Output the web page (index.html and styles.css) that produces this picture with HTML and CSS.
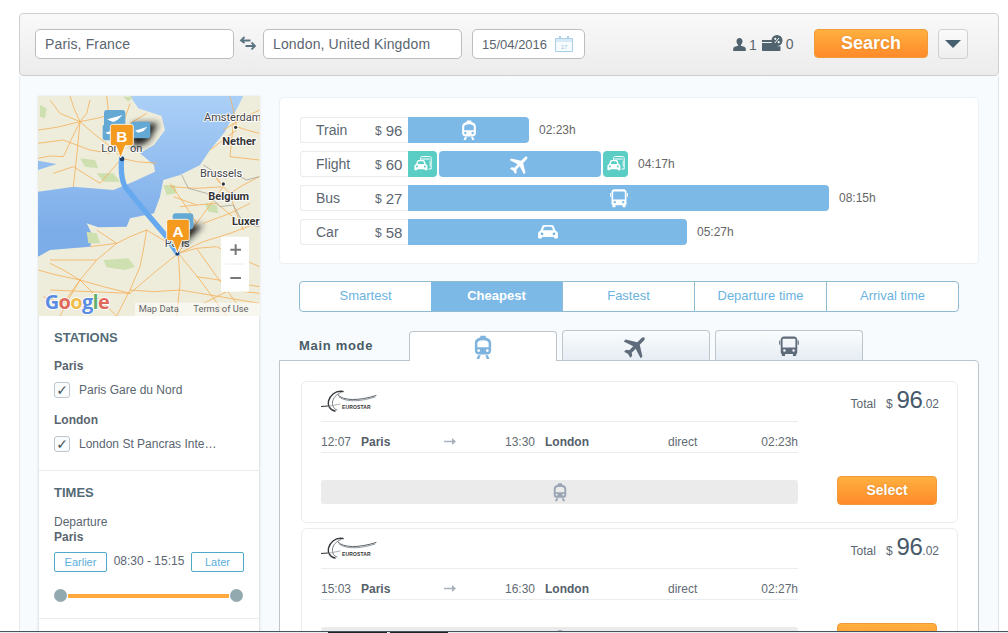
FILE: index.html
```html
<!DOCTYPE html>
<html lang="en">
<head>
<meta charset="utf-8">
<title>Paris to London</title>
<link rel="stylesheet" href="styles.css">
</head>
<body>
<svg class="defs" width="0" height="0" aria-hidden="true">
  <defs>
    <symbol id="i-train" viewBox="0 0 24 24">
      <path fill-rule="evenodd" d="M9.500 1.500h5v1.700C17.200 3.700 19.500 5.300 19.500 8v7.500c0 1.900-1.600 3.500-3.500 3.500H8c-1.900 0-3.500-1.600-3.500-3.500V8c0-2.700 2.300-4.300 5-4.800zM6.800 8.300v3.900h10.400V8.300C17.200 6.800 15 5.700 12 5.700S6.800 6.800 6.800 8.300zM8 14a1.300 1.300 0 100 2.600A1.300 1.300 0 008 14zm8 0a1.300 1.300 0 100 2.600A1.300 1.300 0 0016 14z"/>
      <path d="M7.500 19.500h2.300L8.500 23H6zM16.500 19.500h-2.300l1.300 3.500H18z"/>
    </symbol>
    <symbol id="i-plane" viewBox="0 0 24 24">
      <path transform="rotate(45 12 12)" d="M23 17v-2.400l-9.400-5.900V3.500C13.600 2.400 12.900 1 12 1s-1.600 1.400-1.600 2.500v5.200L1 14.600V17l9.400-3v5.200l-2.400 1.800V23.500l4-1.200 4 1.200V21l-2.400-1.800V14z"/>
    </symbol>
    <symbol id="i-bus" viewBox="0 0 24 24">
      <path fill-rule="evenodd" d="M6.500 1.500h11c2 0 3.500 1.500 3.500 3.500v14c0 .9-.5 1.500-1.200 1.700V23h-3.500v-2.200H7.700V23H4.200v-2.300C3.500 20.500 3 19.900 3 19V5c0-2 1.500-3.500 3.500-3.500zM6 4.200C5.400 4.200 5 4.700 5 5.300v8.400h14V5.300c0-.6-.4-1.100-1-1.100zM7 15.500a1.400 1.400 0 100 2.800 1.400 1.400 0 000-2.800zm10 0a1.400 1.400 0 100 2.800 1.400 1.400 0 000-2.800z"/>
      <path d="M1.300 6h1.200v4.500H1.300zM21.500 6h1.200v4.500h-1.200z"/>
    </symbol>
    <symbol id="i-car" viewBox="0 0 24 24">
      <path fill-rule="evenodd" d="M3.800 10.500 5.700 5.800C6.100 4.800 6.900 4.300 8 4.300h8c1.100 0 1.900.5 2.300 1.500l1.900 4.700c1.300.5 2.600 1.400 2.600 3v4.500c0 .6-.4 1-1 1h-2.300c-.6 0-1-.4-1-1v-.6H5.500v.6c0 .6-.4 1-1 1H2.200c-.6 0-1-.4-1-1v-4.500c0-1.600 1.300-2.500 2.600-3zM6.400 10.200h11.200L16.300 7c-.2-.5-.5-.7-1-.7H8.700c-.5 0-.8.2-1 .7zM5.500 12.600a1.500 1.500 0 100 3 1.500 1.500 0 000-3zm13 0a1.500 1.500 0 100 3 1.500 1.500 0 000-3z"/>
    </symbol>
    <symbol id="i-shuttle" viewBox="0 0 24 24">
      <path fill="none" stroke="currentColor" stroke-width="1.200" d="M9 7V5c0-1.200.8-2 2-2h9c1 0 1.800.8 1.800 2v13h-3"/>
      <path d="M10 5.500h10v1H10zM20 8h1v7h-1z"/>
      <path fill-rule="evenodd" d="M3.500 12.200 5 8.500c.3-.8.9-1.200 1.800-1.200h5.400c.9 0 1.500.4 1.800 1.200l1.500 3.700c1 .4 1.800 1.100 1.800 2.400v4.200c0 .5-.3.8-.8.8h-1.700c-.5 0-.8-.3-.8-.8v-.5H5v.5c0 .5-.3.8-.8.8H2.500c-.5 0-.8-.3-.8-.8v-4.200c0-1.300.8-2 1.800-2.400zM5.500 12h8l-.9-2.600c-.1-.4-.4-.6-.8-.6H7.200c-.4 0-.7.2-.8.6zM4.700 13.800a1.200 1.200 0 100 2.400 1.200 1.200 0 000-2.400zm9.600 0a1.200 1.200 0 100 2.400 1.200 1.200 0 000-2.400z"/>
    </symbol>
    <symbol id="i-logo" viewBox="0 0 56 24">
      <g fill="none" stroke-linecap="round">
        <path d="M22 2.500C14 1 9 7 7.500 12 6.500 16 8.500 21 14 22" stroke="#34383c" stroke-width="1.400"/>
        <path d="M20 3.500C15 5.500 12 9 11.500 13 11.300 17 12.500 20 16 21" stroke="#7a8086" stroke-width="1"/>
        <path d="M17 6C22 12 38 12 55 6.500" stroke="#5b6268" stroke-width="1"/>
        <path d="M18 8C26 14 42 12 54 8" stroke="#8f969c" stroke-width="1"/>
        <path d="M0 17.500 7 17" stroke="#2f3336" stroke-width="1"/>
        <path d="M9 17 19 15" stroke="#9aa0a5" stroke-width=".8"/>
      </g>
    </symbol>
  </defs>
</svg>

<div class="page">
  <header class="search-bar">
    <div class="field field-place">Paris, France</div>
    <svg class="swap" width="18" height="14" viewBox="0 0 18 14"><g fill="none" stroke="#5b7482" stroke-width="1.800"><path d="M2 4.500h9.500M5.500 1 2 4.500 5.500 7"/><path d="M16 10H6.500M12.500 6.500 16 10l-3.500 3.500"/></g></svg>
    <div class="field field-place">London, United Kingdom</div>
    <div class="field field-date">
      <span>15/04/2016</span>
      <svg width="18" height="16" viewBox="0 0 18 16"><path d="M.5 2.500h17v13H.5z" fill="#f6fbfe" stroke="#a9d0e6"/><path d="M1 3h16v3H1z" fill="#d6e9f4"/><path d="M4 0h2v3H4zM12 0h2v3h-2z" fill="#a9d0e6"/><text class="cal-day" x="9" y="13">17</text></svg>
    </div>
    <div class="travellers">
      <svg width="15" height="13" viewBox="0 0 15 13"><path d="M7.500 0C9.300 0 10.500 1.300 10.500 3.200c0 1.500-.7 2.900-1.600 3.500v1.100c2.300.5 4.900 1.200 4.900 3V13H1.200v-2.200c0-1.800 2.600-2.500 4.900-3V6.700C5.200 6.100 4.500 4.700 4.500 3.200 4.500 1.300 5.700 0 7.500 0z" fill="#50636f"/></svg>
      <span class="count-a">1</span>
      <svg class="wallet" width="21" height="16" viewBox="0 0 21 16"><path d="M0 5h10v2H0zM0 8h12.500l3 3.300h3V15c0 .6-.4 1-1 1H1c-.6 0-1-.4-1-1z" fill="#50636f"/><circle cx="15" cy="5.500" r="5.500" fill="#50636f"/><path d="M12.800 8 17 3" stroke="#fff" stroke-width="1"/><circle cx="13.300" cy="3.800" r="1.100" fill="#fff"/><circle cx="16.700" cy="7.200" r="1.100" fill="#fff"/></svg>
      <span>0</span>
    </div>
    <button class="btn btn-search" type="button">Search</button>
    <button class="btn-more" type="button"><span class="caret"></span></button>
  </header>

  <div class="content">
    <aside class="sidebar">
      <svg class="map" width="222" height="220" viewBox="24 18 666 660">
        <defs>
          <linearGradient id="sea" x1="0" y1="0" x2="0" y2="1"><stop offset="0" stop-color="#abd0f7"/><stop offset=".6" stop-color="#7dade9"/></linearGradient>
          <filter id="blur" x="-50%" y="-50%" width="200%" height="200%"><feGaussianBlur stdDeviation="9"/></filter>
          <filter id="soft" x="-5%" y="-5%" width="110%" height="110%"><feGaussianBlur stdDeviation="1"/></filter>
        </defs>
        <g filter="url(#soft)">
          <rect x="24" y="18" width="666" height="660" fill="url(#sea)"/>
          <path d="M24 18H300L325 55 395 78 405 120 372 165 330 190 372 225 375 245 310 275 250 300 130 290 90 296 24 305V240L80 222 24 212z" fill="#eeeddc"/>
          <path d="M640 18 585 125 540 180 510 225 450 255 400 270 390 320 372 370 300 385 290 410 205 412 170 400 190 440 180 470 60 480 24 500V678H690V18z" fill="#eeeddc"/>
          <g fill="#cfe0b0">
            <path d="M150 205l45 5 10 25-40-5zM200 250l50 0 20 25-50 0zM30 45l20 10-5 30-15-5zM220 510l75-5 20 25-30 10-55-8zM170 425l30 5 10 30-35 0zM525 340l35 5 5 25-30-5zM280 20h30l-15 15zM400 285l35 0 5 25-30 5z"/>
          </g>
          <g fill="none" stroke="#f5ae58" stroke-width="2.400" stroke-linejoin="round">
            <path d="M120 18 132 55 150 95 190 130 235 165 272 200M24 120 80 112 150 95 200 85 240 75M150 95 128 140 100 200 60 198 24 205M275 205 320 215 380 220M275 205 245 240 210 280M270 200 255 150 240 100 235 60 230 18M130 290 140 200 150 95M300 100 325 85 350 70"/>
            <path d="M420 280 455 330 500 400 470 450 445 490M445 490 520 455 600 430 680 400M445 490 500 475 560 470 620 500 688 530M445 490 400 450 350 420 300 440 260 460 200 510 150 570 80 555 24 540M445 490 450 580 440 678M445 490 510 570 590 678M445 490 370 550 300 610 220 590 150 570 120 620 90 678M150 570 100 540 60 520M150 570 200 620 260 678M260 460 220 465 180 470"/>
            <path d="M540 240 570 280 600 310 640 285 688 260M540 240 565 270 580 290 540 345 500 400M600 310 615 360 640 420M580 120 630 90 688 60M610 100 605 150 600 200 645 205 688 210M540 180 580 150 620 120M600 20 610 60 620 110 650 120 688 130"/>
            <path d="M450 350 500 345 560 340 590 365 620 390M420 290 500 295 580 290M300 600 370 605 450 600 570 620 688 640M60 600 180 605 300 610M350 420 340 480 330 530 300 600 260 678M500 560 600 575 688 590"/>
            <path d="M60 30 90 70 150 95M24 160 100 150 180 180 240 190M180 30 170 70 150 95M300 40 280 100 260 150M70 250 130 230 210 280M40 620 100 640 150 570M520 640 600 600 688 610M520 400 600 370 660 340M620 640 560 560 500 475M430 320 500 345M200 420 260 460M60 510 140 510 200 510"/>
          </g>
          <g fill="none" stroke="#9a9c98" stroke-width="2.200">
            <path d="M455 255 475 295 530 310 570 350 610 345 640 400 688 410M520 225 560 250 600 245 650 270 688 260"/>
          </g>
        </g>
        <path d="M275 205C272 240 275 270 285 290L350 370 408 438 442 490" fill="none" stroke="#66a9ee" stroke-width="16" stroke-linejoin="round" stroke-linecap="round"/>
        <g class="map-label">
          <text x="522" y="92">Amsterdam</text>
          <text x="577" y="165" class="map-bold">Nether</text>
          <text x="510" y="260">Brussels</text>
          <text x="535" y="330" class="map-bold">Belgium</text>
          <text x="606" y="406" class="map-bold">Luxer</text>
          <text x="214" y="187">Lon</text>
          <text x="300" y="187">on</text>
          <text x="404" y="472">Paris</text>
        </g>
        <g fill="#333"><circle cx="617" cy="112" r="8" fill="#fff"/><circle cx="617" cy="112" r="5"/><circle cx="580" cy="282" r="8" fill="#fff"/><circle cx="580" cy="282" r="5"/></g>
        <g filter="url(#blur)" fill="#1b1b1b"><path d="M310 100h75l-30 55h-55z"/><path d="M305 120h65l-30 45h-35z"/><path d="M480 405h40l-55 55h-25z"/></g>
        <g fill="#64a8d4">
          <rect x="222" y="60" width="64" height="55" rx="9"/><rect x="218" y="103" width="56" height="48" rx="9"/><rect x="303" y="95" width="58" height="50" rx="9"/><rect x="428" y="370" width="62" height="48" rx="9"/>
        </g>
        <g fill="#fff"><path d="M232 88 278 75 262 90 250 96 240 92zM315 122 352 110 340 124 325 128z"/><path d="M226 128 258 118 248 130 234 133z"/></g>
        <circle cx="442" cy="491" r="7" fill="#1f3f67" stroke="#cfe3f6" stroke-width="2"/><circle cx="276" cy="207" r="7" fill="#1f3f67"/>
        <g fill="#f49a1f" stroke="#fff" stroke-width="2.500">
          <path d="M248 103h55c4 0 7 3 7 7v50c0 4-3 7-7 7h-17l-14 37-14-37h-10c-4 0-7-3-7-7v-50c0-4 3-7 7-7z"/>
          <path d="M417 388h54c4 0 7 3 7 7v50c0 4-3 7-7 7h-15l-14 37-14-37h-11c-4 0-7-3-7-7v-50c0-4 3-7 7-7z"/>
        </g>
        <text class="pin-letter" x="275" y="156">B</text>
        <text class="pin-letter" x="444" y="440">A</text>
        <rect x="315" y="638" width="375" height="40" fill="#fff" opacity=".55"/>
        <text class="map-foot" x="326" y="666">Map Data</text>
        <text class="map-foot" x="490" y="666">Terms of Use</text>
        <text class="google" x="44" y="656"><tspan fill="#5c8ce2">G</tspan><tspan fill="#e0685a">o</tspan><tspan fill="#f0bd4c">o</tspan><tspan fill="#5c8ce2">g</tspan><tspan fill="#62b06a">l</tspan><tspan fill="#e0685a">e</tspan></text>
        <rect x="573" y="440" width="84" height="165" rx="4" fill="#fff"/>
        <path d="M585 522h60" stroke="#e6e6e6" stroke-width="2"/>
        <path d="M601 476h13v-13h6v13h13v6h-13v13h-6v-13h-13zM601 561h32v6h-32z" fill="#777"/>
      </svg>

      <section class="side-block">
        <h3 class="side-title">STATIONS</h3>
        <div class="city">Paris</div>
        <div class="check-row"><span class="check">✓</span><span>Paris Gare du Nord</span></div>
        <div class="city city-next">London</div>
        <div class="check-row"><span class="check">✓</span><span>London St Pancras Inte…</span></div>
      </section>
      <section class="side-block side-times">
        <h3 class="side-title">TIMES</h3>
        <div class="dep">Departure</div>
        <div class="city">Paris</div>
        <div class="time-row">
          <span class="time-btn">Earlier</span>
          <span class="time-range">08:30 - 15:15</span>
          <span class="time-btn">Later</span>
        </div>
        <div class="slider"><span class="knob"></span><span class="slider-line"></span><span class="knob"></span></div>
      </section>
    </aside>

    <main class="main">
      <section class="overview">
        <div class="ov-row">
          <div class="ov-label"><span class="ov-name">Train</span><span class="ov-cur">$</span><span class="ov-price">96</span></div>
          <div class="ov-bar ov-w-train"><svg class="ic-bar"><use href="#i-train"/></svg></div>
          <span class="ov-time">02:23h</span>
        </div>
        <div class="ov-row">
          <div class="ov-label"><span class="ov-name">Flight</span><span class="ov-cur">$</span><span class="ov-price">60</span></div>
          <div class="ov-bar ov-teal ov-w-first"><svg class="ic-shuttle"><use href="#i-shuttle"/></svg></div>
          <div class="ov-bar ov-w-flight"><svg class="ic-bar"><use href="#i-plane"/></svg></div>
          <div class="ov-bar ov-teal ov-w-last"><svg class="ic-shuttle"><use href="#i-shuttle"/></svg></div>
          <span class="ov-time">04:17h</span>
        </div>
        <div class="ov-row">
          <div class="ov-label"><span class="ov-name">Bus</span><span class="ov-cur">$</span><span class="ov-price">27</span></div>
          <div class="ov-bar ov-w-bus"><svg class="ic-bus"><use href="#i-bus"/></svg></div>
          <span class="ov-time">08:15h</span>
        </div>
        <div class="ov-row">
          <div class="ov-label"><span class="ov-name">Car</span><span class="ov-cur">$</span><span class="ov-price">58</span></div>
          <div class="ov-bar ov-w-car"><svg class="ic-bar"><use href="#i-car"/></svg></div>
          <span class="ov-time">05:27h</span>
        </div>
      </section>

      <nav class="sort">
        <span class="sort-tab">Smartest</span>
        <span class="sort-tab sort-active">Cheapest</span>
        <span class="sort-tab">Fastest</span>
        <span class="sort-tab">Departure time</span>
        <span class="sort-tab">Arrival time</span>
      </nav>

      <div class="modes">
        <span class="modes-label">Main mode</span>
        <div class="mode-tab mode-active"><svg class="ic-mode ic-blue"><use href="#i-train"/></svg></div>
        <div class="mode-tab"><svg class="ic-mode ic-slate"><use href="#i-plane"/></svg></div>
        <div class="mode-tab"><svg class="ic-mode-bus ic-slate"><use href="#i-bus"/></svg></div>
      </div>

      <section class="results">
        <article class="card">
          <div class="card-left">
            <div class="carrier"><svg class="logo"><use href="#i-logo"/></svg><span class="logo-text">EUROSTAR</span></div>
            <div class="leg">
              <span>12:07</span><b>Paris</b>
              <svg class="leg-arrow" width="12" height="9" viewBox="0 0 12 9"><path d="M0 3.800h8V1l4 3.500L8 8V5.200H0z" fill="#a9b2bb"/></svg>
              <span>13:30</span><b>London</b><span>direct</span><span>02:23h</span>
            </div>
            <div class="strip"><svg class="ic-strip"><use href="#i-train"/></svg></div>
          </div>
          <div class="card-right">
            <div class="total"><span class="total-label">Total</span><span class="total-cur">$</span><span class="total-big">96</span><span class="total-cents">.02</span></div>
            <button class="btn btn-select" type="button">Select</button>
          </div>
        </article>
        <article class="card">
          <div class="card-left">
            <div class="carrier"><svg class="logo"><use href="#i-logo"/></svg><span class="logo-text">EUROSTAR</span></div>
            <div class="leg">
              <span>15:03</span><b>Paris</b>
              <svg class="leg-arrow" width="12" height="9" viewBox="0 0 12 9"><path d="M0 3.800h8V1l4 3.500L8 8V5.200H0z" fill="#a9b2bb"/></svg>
              <span>16:30</span><b>London</b><span>direct</span><span>02:27h</span>
            </div>
            <div class="strip"><svg class="ic-strip"><use href="#i-train"/></svg></div>
          </div>
          <div class="card-right">
            <div class="total"><span class="total-label">Total</span><span class="total-cur">$</span><span class="total-big">96</span><span class="total-cents">.02</span></div>
            <button class="btn btn-select" type="button">Select</button>
          </div>
        </article>
      </section>
    </main>
  </div>
</div>
<div class="edge"><span class="edge-seg edge-a"></span><span class="edge-seg edge-b"></span></div>
</body>
</html>
```

FILE: styles.css
```css
* { box-sizing: border-box; }
html, body { margin: 0; height: 633px; overflow: hidden; background: #fff; }
body { font-family: "Liberation Sans", Arial, sans-serif; color: #5b6670; font-size: 12px; }
.defs { position: absolute; }
.page { width: 980px; margin-left: 19px; padding-top: 13px; }

/* search bar */
.search-bar {
  height: 63px; display: flex; align-items: center; padding: 0 29px 1px 15px;
  background: linear-gradient(#f9f9f9, #ececec); border: 1px solid #cfcfcf; border-radius: 4px;
}
.field {
  height: 30px; display: flex; align-items: center; padding: 0 9px; font-size: 14px; letter-spacing: .14px; color: #5a6570;
  background: #fff; border: 1px solid #b9bec2; border-radius: 5px;
}
.field-place { width: 199px; }
.swap { margin: -2px 6px 0 5px; flex: none; width: 18px; }
.field-date { width: 113px; margin-left: 10px; font-size: 13px; letter-spacing: 0; justify-content: space-between; padding-right: 11px; }
.cal-day { font: 6px "Liberation Sans", sans-serif; fill: #9cc6de; text-anchor: middle; }
.travellers { display: flex; align-items: center; margin-left: 147px; width: 82px; color: #5a6570; font-size: 14px; }
.count-a { margin: 2px 3px 0 2px; }
.wallet { margin: -3px 3px 0 2px; }
.btn {
  border: 1px solid #ef9a3b; border-radius: 4px; color: #fff; font-family: inherit; font-weight: bold;
  background: linear-gradient(#ffb03f, #ff8a2a); text-shadow: 0 0 2px rgba(150,80,0,.35); padding: 0;
}
.btn-search { width: 114px; height: 29px; font-size: 18px; margin-top: -1px; }
.btn-more {
  width: 30px; height: 30px; margin-left: 10px; padding: 0; display: flex; align-items: center; justify-content: center;
  background: linear-gradient(#fbfbfb, #eeeeee); border: 1px solid #cdd1d4; border-radius: 4px;
}
.caret { width: 0; height: 0; border-left: 8px solid transparent; border-right: 8px solid transparent; border-top: 8px solid #47606f; }

/* content */
.content {
  display: flex; gap: 19px; padding: 20px 19px 0 18px; height: 560px;
  background: #f7fbfd; border-left: 1px solid #e7ebee; border-right: 1px solid #dfe3e6;
}
.sidebar { width: 222px; flex: none; background: #fff; border: 1px solid #e3e8ec; border-top: 0; box-shadow: 0 0 2px #dde3e7; align-self: stretch; }
.map { display: block; margin-left: -1px; }
.map-label text { font: 33px "Roboto", "Liberation Sans", sans-serif; fill: #444; stroke: #fff; stroke-width: 5px; paint-order: stroke; }
.map-label .map-bold { font-weight: 700; fill: #333; }
.pin-letter { font: bold 46px "Liberation Sans", sans-serif; fill: #fff; text-anchor: middle; }
.map-foot { font: 28px "Roboto", "Liberation Sans", sans-serif; fill: #666; }
.google { font: bold 60px "Open Sans", "Liberation Sans", sans-serif; letter-spacing: -2px; stroke: #fff; stroke-width: 5px; paint-order: stroke; }

.side-block { padding: 14px 15px 0; height: 155px; border-bottom: 1px solid #e8ecef; }
.side-title { margin: 0; font-size: 13px; line-height: 16px; font-weight: bold; color: #546b78; }
.city { font-weight: bold; font-size: 12px; line-height: 15px; color: #5a6570; margin-top: 13px; }
.city-next { margin-top: 15px; }
.check-row { display: flex; align-items: center; gap: 9px; margin-top: 8px; height: 16px; color: #5a6570; }
.check {
  width: 16px; height: 16px; border: 1px solid #bcc6cc; border-radius: 3px; display: flex; align-items: center; justify-content: center;
  font: bold 14px "DejaVu Sans", sans-serif; color: #44525c; background: #fbfcfd;
}
.side-times { height: 148px; padding-top: 14px; }
.dep { margin-top: 14px; line-height: 15px; color: #5a6570; }
.side-times .city { margin-top: 0; }
.time-row { display: flex; align-items: center; justify-content: space-between; margin-top: 7px; width: 190px; }
.time-btn {
  width: 53px; height: 20px; display: flex; align-items: center; justify-content: center;
  border: 1px solid #4ea9ca; border-radius: 2px; font-size: 11px; color: #5aaedb; background: #fff;
}
.time-range { color: #5a6570; margin-top: -2px; }
.slider { display: flex; align-items: center; margin: 17px 0 0 0; width: 189px; }
.knob { width: 13px; height: 13px; border-radius: 50%; background: #93a9b0; flex: none; }
.slider-line { flex: 1; height: 4px; background: #ffa940; margin: 0 1px; }

/* main */
.main { width: 700px; flex: none; }
.overview { height: 167px; margin-top: 1px; padding: 19px 20px 0; background: #fff; border: 1px solid #edf1f3; border-radius: 4px; }
.ov-row { display: flex; align-items: center; height: 26px; margin-bottom: 8px; gap: 2px; }
.ov-label {
  width: 108px; height: 26px; display: flex; align-items: center; padding-left: 15px; margin-right: -2px;
  border: 1px solid #e7ecef; border-right: 0; border-radius: 3px 0 0 3px; color: #5b6670;
}
.ov-name { width: 59px; font-size: 14px; }
.ov-cur { font-size: 12px; margin-right: 4px; margin-top: 2px; }
.ov-price { font-size: 15px; }
.ov-bar { height: 26px; background: #7db9e6; border-radius: 0 4px 4px 0; display: flex; align-items: center; justify-content: center; flex: none; }
.ov-teal { background: #5acdc4; }
.ov-w-train { width: 121px; }
.ov-w-first { width: 29px; }
.ov-w-flight { width: 162px; border-radius: 4px; }
.ov-w-last { width: 25px; border-radius: 4px; }
.ov-w-bus { width: 421px; }
.ov-w-car { width: 279px; }
.ic-bar { width: 22px; height: 22px; fill: #fff; }
.ic-bus { width: 20px; height: 20px; fill: #fff; }
.ic-shuttle { width: 20px; height: 20px; fill: #fff; color: #fff; }
.ov-time { margin-left: 8px; color: #666; }

.sort { display: flex; width: 660px; height: 31px; margin: 17px 0 0 20px; background: #fff; border: 1px solid #8fbcd3; border-radius: 4px; overflow: hidden; }
.sort-tab { flex: 1; display: flex; align-items: center; justify-content: center; font-size: 13px; padding-bottom: 2px; color: #6bb3df; border-left: 1px solid #8fbcd3; }
.sort-tab:first-child { border-left: 0; }
.sort-active { background: #7db9e6; color: #fff; font-weight: bold; border-left: 0; }

.modes { display: flex; align-items: flex-end; height: 30px; margin: 18px 0 0 20px; gap: 5px; position: relative; z-index: 1; }
.modes-label { width: 105px; font-weight: bold; font-size: 13px; letter-spacing: .7px; color: #4a5c68; line-height: 16px; padding-bottom: 6px; }
.mode-tab {
  width: 148px; height: 30px; display: flex; align-items: center; justify-content: center;
  background: linear-gradient(#fafcfd, #e6edf4); border: 1px solid #bcc6cc; border-bottom: 0; border-radius: 4px 4px 0 0;
}
.mode-active { background: #fff; margin-bottom: -1px; }
.ic-mode { width: 26px; height: 26px; }
.ic-mode-bus { width: 22px; height: 22px; }
.ic-blue { fill: #7db3dc; }
.ic-slate { fill: #5f6b7a; }

.results { height: 300px; padding: 20px 20px 0 21px; background: #fff; border: 1px solid #bcc5cb; border-radius: 0 4px 0 0; }
.card { display: flex; width: 657px; height: 142px; margin-bottom: 5px; padding: 0 20px 0 19px; border: 1px solid #ececec; border-radius: 6px; }
.card-left { width: 477px; flex: none; }
.carrier { height: 40px; border-bottom: 1px solid #e9edef; position: relative; }
.logo { display: block; width: 56px; height: 24px; position: absolute; left: 0; top: 7px; }
.logo-text { position: absolute; left: 21px; top: 22px; font-size: 5px; line-height: 6px; font-weight: bold; letter-spacing: .15px; color: #333; }
.leg {
  display: grid; grid-template-columns: 40px 83px 61px 40px 123px 1fr auto; align-items: end;
  height: 31px; padding-bottom: 3px; border-bottom: 1px solid #e9edef; color: #5f6a73;
}
.leg b { color: #55606a; }
.leg-arrow { margin-bottom: 3px; }
.strip { height: 24px; margin-top: 27px; background: #ebebeb; border-radius: 3px; display: flex; align-items: center; justify-content: center; }
.ic-strip { width: 20px; height: 20px; fill: #9aa4b5; }
.card-right { flex: 1; display: flex; flex-direction: column; align-items: flex-end; }
.total { display: flex; align-items: baseline; margin: 3px -2px 0 0; height: 30px; color: #5b6670; }
.total-label { margin-right: 10px; }
.total-cur { margin-right: 4px; }
.total-big { font-size: 24px; letter-spacing: -.5px; color: #47596a; line-height: 30px; }
.total-cents { font-size: 12px; }
.btn-select { width: 100px; height: 29px; margin-top: 61px; padding-bottom: 2px; font-size: 14px; }

.edge { position: fixed; left: 0; right: 0; bottom: 0; height: 2px; background: #e6edf2; border-top: 1px solid #46525e; display: flex; }
.edge-seg { height: 1px; background: #222; }
.edge-a { width: 59px; margin-left: 328px; }
.edge-b { width: 58px; margin-left: 3px; }
```
